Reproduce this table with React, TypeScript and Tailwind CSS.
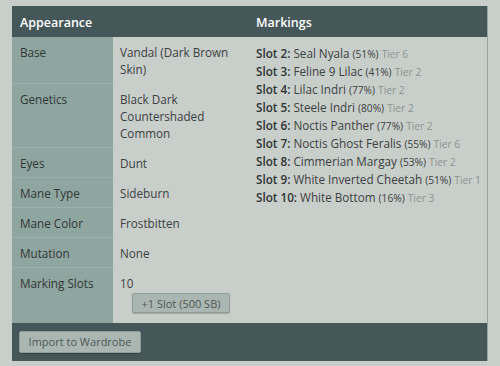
import React from "react";

const rows: { label: string; value: string[]; extra?: boolean }[] = [
  { label: "Base", value: ["Vandal (Dark Brown", "Skin)"] },
  { label: "Genetics", value: ["Black Dark", "Countershaded", "Common"] },
  { label: "Eyes", value: ["Dunt"] },
  { label: "Mane Type", value: ["Sideburn"] },
  { label: "Mane Color", value: ["Frostbitten"] },
  { label: "Mutation", value: ["None"] },
  { label: "Marking Slots", value: ["10"], extra: true },
];

const slots = [
  ["Slot 2:", "Seal Nyala", "(51%)", "Tier 6"],
  ["Slot 3:", "Feline 9 Lilac", "(41%)", "Tier 2"],
  ["Slot 4:", "Lilac Indri", "(77%)", "Tier 2"],
  ["Slot 5:", "Steele Indri", "(80%)", "Tier 2"],
  ["Slot 6:", "Noctis Panther", "(77%)", "Tier 2"],
  ["Slot 7:", "Noctis Ghost Feralis", "(55%)", "Tier 6"],
  ["Slot 8:", "Cimmerian Margay", "(53%)", "Tier 2"],
  ["Slot 9:", "White Inverted Cheetah", "(51%)", "Tier 1"],
  ["Slot 10:", "White Bottom", "(16%)", "Tier 3"],
];

export default function App() {
  return (
    <div className="w-[500px] h-[366px] bg-[#c8ceca] pt-[6px] pl-[12px] font-['Open_Sans',sans-serif] text-[11.7px] text-[#3c4241]">
      <div className="w-[476px] h-[355px] flex flex-col border-r border-[#98a39f] overflow-hidden">
        <div className="h-[31px] shrink-0 bg-[#455759] grid grid-cols-[238px_1fr] items-center pt-[3px] text-white text-[12.5px] font-semibold">
          <div className="pl-[8px]">Appearance</div>
          <div className="pl-[6px]">Markings</div>
        </div>
        <div className="flex-1 grid grid-cols-[238px_minmax(0,1fr)]">
          <div className="flex flex-col">
            {rows.map((r, i) => (
              <div key={r.label} className={`flex ${i === rows.length - 1 ? "flex-1" : ""}`}>
                <div className={`w-[101px] shrink-0 bg-[#8fa59f] pl-[8px] pt-[7px] pb-[5px] leading-[17px] text-[#2f3837] ${i > 0 ? "border-t border-[#9bb0aa]" : ""}`}>
                  {r.label}
                </div>
                <div className={`pl-[7px] pt-[7px] pb-[5px] leading-[17px] ${i > 0 ? "border-t border-transparent" : ""}`}>
                  {r.value.map((v) => (
                    <div key={v}>{v}</div>
                  ))}
                  {r.extra && (
                    <button className="mt-[1px] ml-[12px] h-[20px] w-[98px] bg-[#a9b6b1] border border-[#8f9d98] rounded-[2px] text-[11px] text-[#505957] shadow-[0_1px_1px_rgba(0,0,0,0.2)]">
                      +1 Slot (500 SB)
                    </button>
                  )}
                </div>
              </div>
            ))}
          </div>
          <div className="pl-[6px] pt-[8px] leading-[17px]">
            {slots.map(([s, n, p, t]) => (
              <div key={s} className="whitespace-nowrap">
                <span className="font-semibold text-[#2f3534]">{s}</span> {n}{" "}
                <span className="text-[10.2px]">{p}</span>{" "}
                <span className="text-[10.2px] text-[#8b9592]">{t}</span>
              </div>
            ))}
          </div>
        </div>
        <div className="h-[38px] shrink-0 bg-[#455759] flex items-center pl-[7px]">
          <button className="h-[22px] w-[122px] bg-[#a9b6b1] border border-[#8f9d98] rounded-[2px] text-[11px] text-[#505957] shadow-[0_1px_1px_rgba(0,0,0,0.25)]">
            Import to Wardrobe
          </button>
        </div>
      </div>
    </div>
  );
}
